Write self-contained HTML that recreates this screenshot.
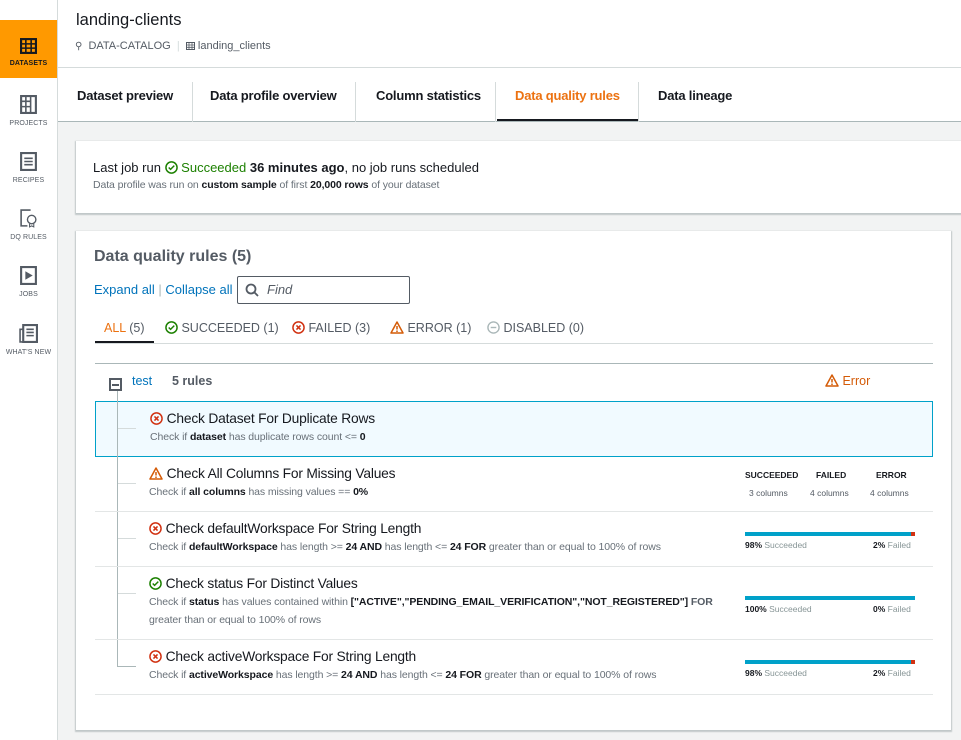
<!DOCTYPE html>
<html><head><meta charset="utf-8"><style>
*{box-sizing:border-box;margin:0;padding:0}
body{width:961px;height:740px;overflow:hidden;background:#f2f3f3;font-family:"Liberation Sans",sans-serif;color:#16191f;position:relative}
.a{position:absolute;white-space:nowrap}
.side{position:absolute;left:0;top:0;width:58px;height:740px;background:#fff;border-right:1px solid #d5dbdb}
.si{position:absolute;left:0;width:57px;text-align:center;font-size:7px;color:#545b64;letter-spacing:.1px}
.si svg{display:block;margin:0 auto 6px}
.hdr{position:absolute;left:58px;top:0;right:0;height:122px;background:#fff;border-bottom:1px solid #aab7b8}
.tab{position:absolute;top:88px;font-size:13px;font-weight:bold;color:#16191f;letter-spacing:-.2px}
.sep{position:absolute;top:82px;width:1px;height:40px;background:#d5dbdb}
.panel{position:absolute;background:#fff;box-shadow:0 1px 1px 1px rgba(0,28,36,.2)}
.blue{color:#0073bb}
.t{font-size:13.8px;color:#16191f;letter-spacing:-.2px}
.s{font-size:10.5px;color:#687078;letter-spacing:-.1px}
.s b{color:#16191f}
.hl{position:absolute;height:1px;background:#e3e6e6}
.bar{position:absolute;left:745px;width:170px;height:4px;background:#00a1c9}
.bl{position:absolute;font-size:8.5px;color:#879596}
.bl b{color:#16191f}
</style></head><body>
<div class="side">
 <div class="a" style="left:0;top:20px;width:57px;height:58px;background:#ff9900"></div>
 <div class="si" style="top:38px;color:#16191f;font-weight:bold"><svg width="17" height="16" viewBox="0 0 16 15"><rect x="1" y="1" width="14" height="13" fill="none" stroke="#16191f" stroke-width="2"/><path d="M1 5.5h14M1 9.5h14M5.5 1v13M10.5 1v13" stroke="#16191f" stroke-width="1.5"/></svg>DATASETS</div>
 <div class="si" style="top:95px"><svg width="17" height="19" viewBox="0 0 16 18"><rect x="1" y="1" width="14" height="16" fill="none" stroke="#545b64" stroke-width="2"/><path d="M1 6h9M1 11h9M5.5 1v16M10 1v16" stroke="#545b64" stroke-width="1.5"/></svg>PROJECTS</div>
 <div class="si" style="top:152px"><svg width="17" height="19" viewBox="0 0 16 18"><rect x="1" y="1" width="14" height="16" fill="none" stroke="#545b64" stroke-width="2"/><path d="M4 6h8M4 9h8M4 12h8" stroke="#545b64" stroke-width="1.5"/></svg>RECIPES</div>
 <div class="si" style="top:209px"><svg width="19" height="19" viewBox="0 0 18 18"><path d="M11 1H2v15h6" fill="none" stroke="#545b64" stroke-width="1.5"/><circle cx="12" cy="10" r="4" fill="none" stroke="#545b64" stroke-width="1.3"/><path d="M10 14v3l2-1 2 1v-3" fill="none" stroke="#545b64"/></svg>DQ RULES</div>
 <div class="si" style="top:266px"><svg width="17" height="19" viewBox="0 0 16 18"><rect x="1" y="1" width="14" height="16" fill="none" stroke="#545b64" stroke-width="2"/><path d="M5 5l7 4-7 4z" fill="#545b64"/></svg>JOBS</div>
 <div class="si" style="top:324px"><svg width="19" height="19" viewBox="0 0 18 18"><rect x="4" y="1" width="13" height="16" fill="none" stroke="#545b64" stroke-width="2"/><path d="M4 5H1v12h4M7 5h7M7 8h7M7 11h7" stroke="#545b64" stroke-width="1.5" fill="none"/></svg>WHAT'S NEW</div>
</div>
<div class="hdr"></div>
<div class="a" style="left:76px;top:11px;font-size:16.5px;color:#16191f">landing-clients</div>
<div class="a" style="left:75px;top:40px;font-size:11px;color:#545b64">
 <span style="font-size:10px">⚲</span>&nbsp; DATA-CATALOG &nbsp;<span style="color:#d5dbdb">|</span>&nbsp; <svg width="9" height="8" viewBox="0 0 9 8" style="vertical-align:-1px"><rect x=".5" y=".5" width="8" height="7" fill="none" stroke="#545b64"/><path d="M0 3h9M0 5.3h9M3 0v8M6 0v8" stroke="#545b64" stroke-width=".8"/></svg> landing_clients</div>
<div class="a" style="left:58px;top:67px;right:0;height:1px;background:#d5dbdb"></div>
<div class="tab" style="left:77px">Dataset preview</div>
<div class="sep" style="left:192px"></div>
<div class="tab" style="left:210px">Data profile overview</div>
<div class="sep" style="left:355px"></div>
<div class="tab" style="left:376px">Column statistics</div>
<div class="sep" style="left:495px"></div>
<div class="tab" style="left:515px;color:#ec7211">Data quality rules</div>
<div class="a" style="left:497px;top:119px;width:141px;height:2px;background:#16191f"></div>
<div class="sep" style="left:638px"></div>
<div class="tab" style="left:658px">Data lineage</div>

<div class="panel" style="left:76px;top:141px;width:890px;height:72px"></div>
<div class="a" style="left:93px;top:160px;font-size:13px">Last job run <svg width="13" height="13" viewBox="0 0 14 14" style="vertical-align:-2px"><circle cx="7" cy="7" r="6" fill="none" stroke="#1d8102" stroke-width="1.6"/><path d="M4 7l2 2 4-4" fill="none" stroke="#1d8102" stroke-width="1.6"/></svg> <span style="color:#1d8102">Succeeded</span> <b>36 minutes ago</b>, no job runs scheduled</div>
<div class="a s" style="left:93px;top:179px">Data profile was run on <b>custom sample</b> of first <b>20,000 rows</b> of your dataset</div>

<div class="panel" style="left:76px;top:231px;width:875px;height:499px"></div>
<div class="a" style="left:94px;top:248px;font-size:16px;font-weight:bold;color:#545b64">Data quality rules (5)</div>
<div class="a blue" style="left:94px;top:282px;font-size:13px">Expand all<span style="color:#aab7b8"> | </span>Collapse all</div>
<div class="a" style="left:237px;top:276px;width:173px;height:28px;border:1px solid #545b64;border-radius:2px"></div>
<svg class="a" style="left:245px;top:283px" width="14" height="14" viewBox="0 0 14 14"><circle cx="6" cy="6" r="4.5" fill="none" stroke="#545b64" stroke-width="1.8"/><path d="M9.3 9.3L13 13" stroke="#545b64" stroke-width="1.8"/></svg>
<div class="a" style="left:267px;top:282px;font-size:13px;font-style:italic;color:#545b64">Find</div>

<div class="a" style="left:104px;top:321px;font-size:12.5px;color:#545b64"><span style="color:#ec7211">ALL</span> (5)</div>
<div class="a" style="left:95px;top:341px;width:59px;height:2px;background:#16191f"></div>
<div class="a" style="left:165px;top:321px;font-size:12.5px;color:#545b64"><svg width="13" height="13" viewBox="0 0 14 14" style="vertical-align:-2px"><circle cx="7" cy="7" r="6" fill="none" stroke="#1d8102" stroke-width="1.6"/><path d="M4 7l2 2 4-4" fill="none" stroke="#1d8102" stroke-width="1.6"/></svg> SUCCEEDED (1)</div>
<div class="a" style="left:292px;top:321px;font-size:12.5px;color:#545b64"><svg width="13" height="13" viewBox="0 0 14 14" style="vertical-align:-2px"><circle cx="7" cy="7" r="6" fill="none" stroke="#d13212" stroke-width="1.6"/><path d="M4.8 4.8l4.4 4.4M9.2 4.8l-4.4 4.4" stroke="#d13212" stroke-width="1.6"/></svg> FAILED (3)</div>
<div class="a" style="left:390px;top:321px;font-size:12.5px;color:#545b64"><svg width="14" height="13" viewBox="0 0 14 13" style="vertical-align:-2px"><path d="M7 1L1 12h12z" fill="none" stroke="#d45b07" stroke-width="1.5" stroke-linejoin="round"/><path d="M7 5v3.5M7 9.5v1.5" stroke="#d45b07" stroke-width="1.5"/></svg> ERROR (1)</div>
<div class="a" style="left:487px;top:321px;font-size:12.5px;color:#545b64"><svg width="13" height="13" viewBox="0 0 14 14" style="vertical-align:-2px"><circle cx="7" cy="7" r="6" fill="none" stroke="#aab7b8" stroke-width="1.5"/><path d="M4 7h6" stroke="#aab7b8" stroke-width="1.5"/></svg> DISABLED (0)</div>
<div class="a" style="left:95px;top:343px;width:838px;height:1px;background:#d5dbdb"></div>
<div class="a" style="left:95px;top:363px;width:838px;height:1px;background:#aab7b8"></div>

<div class="a" style="left:117px;top:391px;width:1px;height:276px;background:#aab7b8"></div>
<div class="a" style="left:109px;top:378px;width:13px;height:13px;border:2px solid #545b64;background:#fff"></div>
<div class="a" style="left:112px;top:384px;width:7px;height:1.5px;background:#545b64"></div>
<div class="a blue" style="left:132px;top:374px;font-size:12.5px">test</div>
<div class="a" style="left:172px;top:374px;font-size:12.5px;font-weight:bold;color:#545b64">5 rules</div>
<div class="a" style="left:825px;top:374px;font-size:12.5px;color:#d45b07"><svg width="14" height="13" viewBox="0 0 14 13" style="vertical-align:-2px"><path d="M7 1L1 12h12z" fill="none" stroke="#d45b07" stroke-width="1.5" stroke-linejoin="round"/><path d="M7 5v3.5M7 9.5v1.5" stroke="#d45b07" stroke-width="1.5"/></svg> Error</div>

<div class="a" style="left:95px;top:401px;width:838px;height:56px;background:#f1faff;border:1px solid #00a1c9"></div>
<div class="a" style="left:117px;top:401px;width:1px;height:56px;background:#aab7b8"></div>

<div class="hl" style="left:95px;top:511px;width:838px"></div>
<div class="hl" style="left:95px;top:566px;width:838px"></div>
<div class="hl" style="left:95px;top:639px;width:838px"></div>
<div class="hl" style="left:95px;top:694px;width:838px"></div>
<div class="a" style="left:118px;top:428px;width:18px;height:1px;background:#d5dbdb"></div>
<div class="a" style="left:118px;top:483px;width:18px;height:1px;background:#d5dbdb"></div>
<div class="a" style="left:118px;top:538px;width:18px;height:1px;background:#d5dbdb"></div>
<div class="a" style="left:118px;top:593px;width:18px;height:1px;background:#d5dbdb"></div>
<div class="a" style="left:118px;top:666px;width:18px;height:1px;background:#aab7b8"></div>

<div class="a t" style="left:150px;top:411px"><svg width="13" height="13" viewBox="0 0 14 14" style="vertical-align:-2px"><circle cx="7" cy="7" r="6" fill="none" stroke="#d13212" stroke-width="1.6"/><path d="M4.8 4.8l4.4 4.4M9.2 4.8l-4.4 4.4" stroke="#d13212" stroke-width="1.6"/></svg> Check Dataset For Duplicate Rows</div>
<div class="a s" style="left:150px;top:431px">Check if <b>dataset</b> has duplicate rows count &lt;= <b>0</b></div>

<div class="a t" style="left:149px;top:466px"><svg width="14" height="13" viewBox="0 0 14 13" style="vertical-align:-2px"><path d="M7 1L1 12h12z" fill="none" stroke="#d45b07" stroke-width="1.5" stroke-linejoin="round"/><path d="M7 5v3.5M7 9.5v1.5" stroke="#d45b07" stroke-width="1.5"/></svg> Check All Columns For Missing Values</div>
<div class="a s" style="left:149px;top:486px">Check if <b>all columns</b> has missing values == <b>0%</b></div>
<div class="a" style="left:745px;top:470px;font-size:8.5px;font-weight:bold">SUCCEEDED</div>
<div class="a" style="left:816px;top:470px;font-size:8.5px;font-weight:bold">FAILED</div>
<div class="a" style="left:876px;top:470px;font-size:8.5px;font-weight:bold">ERROR</div>
<div class="a" style="left:749px;top:488px;font-size:8.5px;color:#545b64">3 columns</div>
<div class="a" style="left:810px;top:488px;font-size:8.5px;color:#545b64">4 columns</div>
<div class="a" style="left:870px;top:488px;font-size:8.5px;color:#545b64">4 columns</div>

<div class="a t" style="left:149px;top:521px"><svg width="13" height="13" viewBox="0 0 14 14" style="vertical-align:-2px"><circle cx="7" cy="7" r="6" fill="none" stroke="#d13212" stroke-width="1.6"/><path d="M4.8 4.8l4.4 4.4M9.2 4.8l-4.4 4.4" stroke="#d13212" stroke-width="1.6"/></svg> Check defaultWorkspace For String Length</div>
<div class="a s" style="left:149px;top:541px">Check if <b>defaultWorkspace</b> has length &gt;= <b>24 AND</b> has length &lt;= <b>24 FOR</b> greater than or equal to 100% of rows</div>
<div class="bar" style="top:532px"></div><div class="a" style="left:911px;top:532px;width:4px;height:4px;background:#d13212"></div>
<div class="bl" style="left:745px;top:540px"><b>98%</b> Succeeded</div>
<div class="bl" style="left:873px;top:540px"><b>2%</b> Failed</div>

<div class="a t" style="left:149px;top:576px"><svg width="13" height="13" viewBox="0 0 14 14" style="vertical-align:-2px"><circle cx="7" cy="7" r="6" fill="none" stroke="#1d8102" stroke-width="1.6"/><path d="M4 7l2 2 4-4" fill="none" stroke="#1d8102" stroke-width="1.6"/></svg> Check status For Distinct Values</div>
<div class="a s" style="left:149px;top:596px">Check if <b>status</b> has values contained within <b>["ACTIVE","PENDING_EMAIL_VERIFICATION","NOT_REGISTERED"]</b> <b style="color:#545b64">FOR</b></div>
<div class="a s" style="left:149px;top:614px">greater than or equal to 100% of rows</div>
<div class="bar" style="top:596px"></div>
<div class="bl" style="left:745px;top:604px"><b>100%</b> Succeeded</div>
<div class="bl" style="left:873px;top:604px"><b>0%</b> Failed</div>

<div class="a t" style="left:149px;top:649px"><svg width="13" height="13" viewBox="0 0 14 14" style="vertical-align:-2px"><circle cx="7" cy="7" r="6" fill="none" stroke="#d13212" stroke-width="1.6"/><path d="M4.8 4.8l4.4 4.4M9.2 4.8l-4.4 4.4" stroke="#d13212" stroke-width="1.6"/></svg> Check activeWorkspace For String Length</div>
<div class="a s" style="left:149px;top:669px">Check if <b>activeWorkspace</b> has length &gt;= <b>24 AND</b> has length &lt;= <b>24 FOR</b> greater than or equal to 100% of rows</div>
<div class="bar" style="top:660px"></div><div class="a" style="left:911px;top:660px;width:4px;height:4px;background:#d13212"></div>
<div class="bl" style="left:745px;top:668px"><b>98%</b> Succeeded</div>
<div class="bl" style="left:873px;top:668px"><b>2%</b> Failed</div>
</body></html>
